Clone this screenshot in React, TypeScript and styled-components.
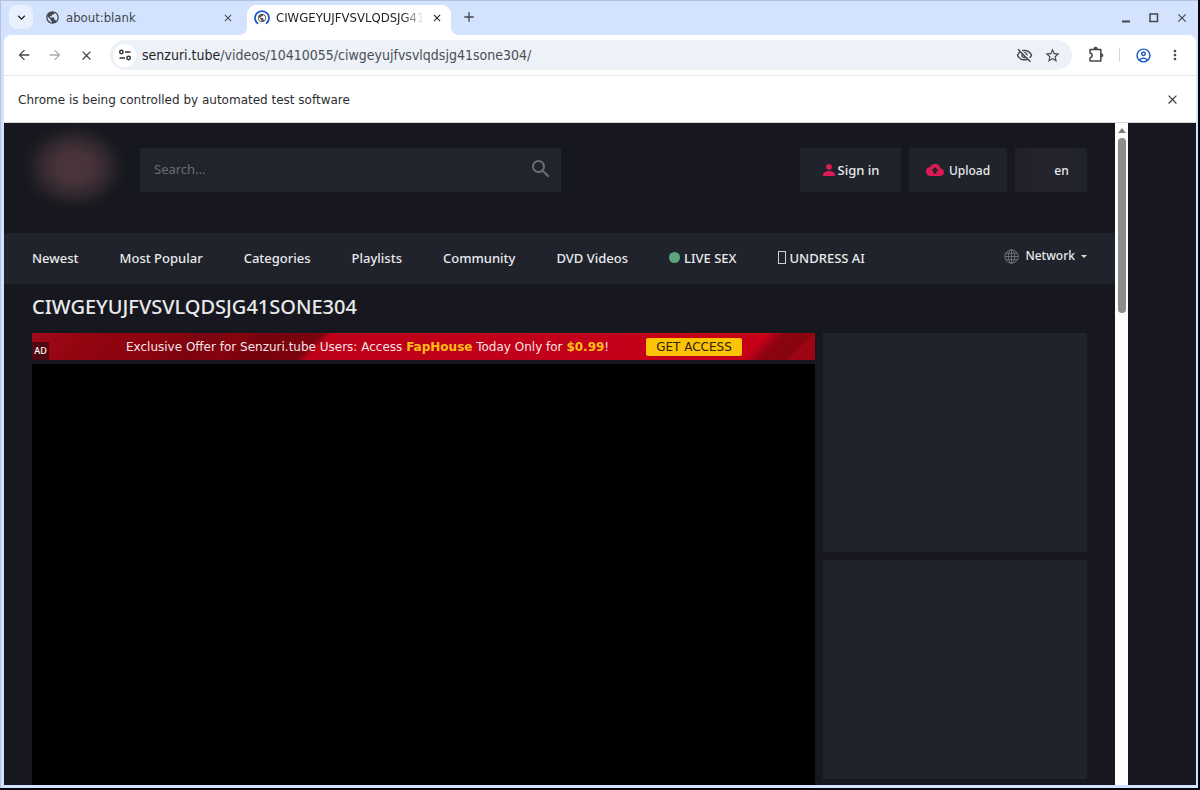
import React from "react";
import styled, { createGlobalStyle } from "styled-components";
import {
  MdArrowBack,
  MdArrowForward,
  MdClose,
  MdCloudUpload,
  MdExpandMore,
  MdMoreVert,
  MdOutlineAccountCircle,
  MdOutlineVisibilityOff,
  MdPerson,
  MdPublic,
  MdSearch,
  MdStarBorder,
  MdAdd,
} from "react-icons/md";

const ui = `"DejaVu Sans Condensed", "DejaVu Sans", sans-serif`;
const site = `"Noto Sans", sans-serif`;

const Global = createGlobalStyle`
  * { box-sizing: border-box; }
  body { margin: 0; background: #05060c; }
  button { border: 0; padding: 0; background: none; color: inherit; font: inherit; }
  a { color: inherit; text-decoration: none; }
  svg { display: block; flex: none; }
`;

const Window = styled.div`
  display: flex;
  flex-direction: column;
  height: 100vh;
  overflow: hidden;
  background: #d4e3fd;
  border: solid #05060c;
  border-width: 0 2px 2px 0;
  padding: 0 2px 3px 4px;
  font-family: ${ui};
  box-shadow: inset 1px 1px 0 #b3c2dc;
`;

const TabStrip = styled.div`
  display: flex;
  align-items: flex-end;
  height: 35px;
  padding-left: 5px;
  flex: none;
  color: #43474e;
`;

const TabSearch = styled.button`
  display: grid;
  place-items: center;
  width: 24px;
  height: 24px;
  margin-bottom: 6px;
  border-radius: 8px;
  background: #eaf1fe;
  color: #1f1f1f;
`;

const Tab = styled.div<{ $active?: boolean }>`
  position: relative;
  display: flex;
  align-items: center;
  gap: 6px;
  width: ${(p) => (p.$active ? 204 : 202)}px;
  height: 30px;
  margin-left: ${(p) => (p.$active ? 0 : 12)}px;
  padding: 0 ${(p) => (p.$active ? 7 : 12)}px 5px ${(p) => (p.$active ? 7 : 0)}px;
  border-radius: 9px 9px 0 0;
  background: ${(p) => (p.$active ? "#fff" : "transparent")};
  color: ${(p) => (p.$active ? "#1f1f1f" : "#43474e")};
  font-size: 13px;
  line-height: 24px;

  &::before,
  &::after {
    content: "";
    display: ${(p) => (p.$active ? "block" : "none")};
    position: absolute;
    bottom: 0;
    width: 8px;
    height: 8px;
  }
  &::before {
    left: -8px;
    background: radial-gradient(circle at 0 0, transparent 8px, #fff 8px);
  }
  &::after {
    right: -8px;
    background: radial-gradient(circle at 100% 0, transparent 8px, #fff 8px);
  }
`;

const TabTitle = styled.span<{ $fade?: boolean }>`
  flex: 1;
  min-width: 0;
  overflow: hidden;
  white-space: nowrap;
  mask-image: ${(p) => (p.$fade ? "linear-gradient(90deg, #000 86%, transparent)" : "none")};
`;

const TabClose = styled.button`
  display: grid;
  place-items: center;
  width: 14px;
  height: 20px;
`;

const NewTab = styled.button`
  display: grid;
  place-items: center;
  width: 24px;
  height: 24px;
  margin: 0 0 6px 6px;
`;

const WindowControls = styled.div`
  display: flex;
  gap: 14px;
  margin: 0 7px 10px auto;
`;

const ControlButton = styled.button`
  display: grid;
  place-items: center;
  width: 14px;
  height: 14px;
`;

const Toolbar = styled.div`
  display: flex;
  align-items: center;
  height: 41px;
  flex: none;
  padding: 0 12px 0 11px;
  background: #fff;
  border-bottom: 1px solid #e4e6ea;
  border-radius: 7px 7px 0 0;
  color: #45474a;
`;

const ToolButton = styled.button<{ $tone?: string }>`
  display: grid;
  place-items: center;
  width: 18px;
  height: 24px;
  color: ${(p) => p.$tone ?? "#45474a"};
`;

const NavButtons = styled.div`
  display: flex;
  gap: 13px;
`;

const Address = styled.div`
  display: flex;
  align-items: center;
  gap: 10px;
  flex: 1;
  height: 30px;
  margin-left: 15px;
  padding: 0 11px 0 3px;
  border-radius: 15px;
  background: #edf1f8;
`;

const SiteInfo = styled.button`
  display: grid;
  place-items: center;
  width: 23px;
  height: 23px;
  margin-right: -4px;
  border-radius: 50%;
  background: #fff;
  color: #333;
`;

const Url = styled.div`
  flex: 1;
  font-size: 14px;
  line-height: 20px;
  color: #4b4f54;
  span { color: #1f1f1f; }
`;

const ToolActions = styled.div`
  display: flex;
  align-items: center;
  gap: 14px;
  margin-left: 15px;
`;

const Divider = styled.span`
  width: 1px;
  height: 14px;
  background: #ccd6e4;
`;

const InfoBar = styled.div`
  display: flex;
  align-items: center;
  justify-content: space-between;
  height: 47px;
  flex: none;
  padding: 1px 15px 0 14px;
  background: #fff;
  border-bottom: 1px solid #d6d8da;
  font: 12px/20px "DejaVu Sans", sans-serif;
  color: #2b2c2e;
`;

const Viewport = styled.div`
  display: flex;
  flex: 1;
  min-height: 0;
  background: #17181f;
  font-family: ${site};
  color: #e9eaec;
`;

const Page = styled.div`
  flex: 1;
  min-width: 0;
  overflow: hidden;
`;

const ScrollTrack = styled.div`
  display: flex;
  flex-direction: column;
  align-items: center;
  width: 13px;
  background: #fdfdfd;
  margin-right: 68px;
`;

const ScrollUp = styled.span`
  margin: 5px 0;
  border: solid transparent;
  border-width: 0 4px 5px;
  border-bottom-color: #7d7f7d;
`;

const Thumb = styled.span`
  width: 8px;
  height: 175px;
  border-radius: 4px;
  background: #8b8d8b;
`;

const Header = styled.header`
  display: flex;
  align-items: flex-start;
  height: 110px;
  padding: 25px 28px 0 18px;
`;

const Logo = styled.a`
  width: 104px;
  height: 88px;
  margin: -25px 14px 0 0;
  background: radial-gradient(closest-side, #4c353c, #48333a 32%, #33282f 62%, #1d1b22 88%, transparent);
`;

const Search = styled.form`
  display: flex;
  align-items: center;
  width: 421px;
  height: 44px;
  padding: 0 8px 2px 14px;
  background: #20242c;
  color: #6a6e76;
`;

const SearchInput = styled.input`
  flex: 1;
  min-width: 0;
  padding: 0;
  border: 0;
  outline: 0;
  background: none;
  color: #e9eaec;
  font: 13px/20px ${site};
  &::placeholder { color: #6a6c73; opacity: 1; }
`;

const Actions = styled.div`
  display: flex;
  gap: 8px;
  margin-left: auto;
`;

const ActionLink = styled.a<{ $width: number; $size: number; $gap: number }>`
  display: flex;
  align-items: center;
  justify-content: center;
  gap: ${(p) => p.$gap}px;
  width: ${(p) => p.$width}px;
  height: 44px;
  background: #20232b;
  font-size: ${(p) => p.$size}px;
  font-weight: 500;
  svg { color: #dc1a54; }
`;

const Language = styled.button`
  width: 72px;
  height: 44px;
  padding-left: 21px;
  background: linear-gradient(90deg, #1f2028, #25242c 45%, #20232b);
  font-size: 12px;
  font-weight: 500;
`;

const Menu = styled.nav`
  display: flex;
  align-items: center;
  gap: 41px;
  height: 51px;
  padding: 0 28px 2px;
  background: #20232b;
  font-size: 13px;
  line-height: 20px;
  font-weight: 500;
  white-space: nowrap;
`;

const MenuLink = styled.a`
  display: flex;
  align-items: center;
  gap: 4px;
`;

const Dot = styled.span`
  width: 11px;
  height: 11px;
  border-radius: 50%;
  background: #5da57f;
`;

const Tofu = styled.span`
  width: 8px;
  height: 13px;
  border: 1px solid #d0d1d4;
`;

const Network = styled.button`
  display: flex;
  align-items: center;
  gap: 6px;
  margin-left: auto;
  padding-bottom: 3px;
  font-size: 12px;
`;

const Caret = styled.span`
  border: solid transparent;
  border-width: 3px 3px 0;
  border-top-color: #d8d9dc;
`;

const Title = styled.h1`
  margin: 0;
  padding: 8px 28px 11px;
  font-size: 20px;
  line-height: 30px;
  font-weight: 500;
`;

const Content = styled.main`
  display: flex;
  gap: 8px;
  padding: 0 28px;
`;

const Player = styled.section`
  flex: 1;
  min-width: 0;
`;

const Banner = styled.a`
  position: relative;
  display: flex;
  align-items: center;
  height: 27px;
  margin-bottom: 4px;
  padding-left: 94px;
  background:
    linear-gradient(135deg, transparent 36%, #bd0019 37%, #c60019 91%, transparent 93%),
    linear-gradient(135deg, #a30a1a, #92040f 8%, #8a0410 17%, #7a0310 22%, #85040f 26%, #74020d 30%, #7e030e 36%, #8c0410 93%, #86040f 96%, #a00616 97%, #98040f);
  font: 12px/20px "DejaVu Sans", sans-serif;
  color: #f5e3e5;
  white-space: nowrap;
  b { color: #ffbe16; }
`;

const AdMark = styled.span`
  position: absolute;
  left: 0;
  bottom: 0;
  width: 17px;
  height: 18px;
  background: #50070f;
  color: #fff;
  font: 500 9px/18px ${site};
  text-align: center;
`;

const Access = styled.span`
  height: 18px;
  margin-left: 37px;
  padding: 0 10px;
  border-radius: 2px;
  background: #fcc307;
  color: #2b2208;
  line-height: 18px;
`;

const Video = styled.div`
  height: 440px;
  background: #000;
`;

const Side = styled.aside`
  display: flex;
  flex-direction: column;
  gap: 8px;
  width: 264px;
`;

const AdSlot = styled.div`
  height: 219px;
  background: #20232b;
`;

const TuneIcon = () => (
  <svg width="14" height="14" viewBox="0 0 14 14" fill="none" stroke="currentColor" strokeWidth="1.5">
    <circle cx="3.4" cy="4" r="1.7" />
    <path d="M7 4h5.5M1.5 10h5.5" />
    <circle cx="10.6" cy="10" r="1.7" />
  </svg>
);

const PuzzleIcon = () => (
  <svg width="18" height="18" viewBox="0 0 18 18" fill="none" stroke="currentColor" strokeWidth="1.5" strokeLinejoin="round">
    <path d="M3 3.500h10.800v11.500H3v-3.300c1.300-.2 2.100-1.100 2.100-2.400S4.300 7.100 3 6.900z" />
    <path d="M7.200 3a1.400 1.400 0 0 1 2.800 0M14.200 7.900a1.400 1.400 0 0 1 0 2.800" fill="currentColor" />
  </svg>
);

const LoadingIcon = () => (
  <svg width="16" height="16" viewBox="0 0 16 16">
    <path d="M4 13.800A7 7 0 1 1 12 13.800" fill="none" stroke="#1a56c4" strokeWidth="1.800" />
    <g transform="translate(3 3)" fill="#50565e">
      <path transform="scale(.417)" d="M12 2C6.480 2 2 6.480 2 12s4.480 10 10 10 10-4.480 10-10S17.520 2 12 2zm-1 17.930c-3.950-.49-7-3.850-7-7.930 0-.62.080-1.210.210-1.790L9 15v1c0 1.100.900 2 2 2v1.930zm6.900-2.540c-.26-.81-1-1.390-1.900-1.390h-1v-3c0-.55-.45-1-1-1H8v-2h2c.550 0 1-.45 1-1V7h2c1.100 0 2-.9 2-2v-.41c2.930 1.190 5 4.060 5 7.410 0 2.080-.8 3.970-2.100 5.390z" />
    </g>
  </svg>
);

const GlobeIcon = () => (
  <svg width="15" height="15" viewBox="0 0 15 15" fill="none" stroke="#6b6e75">
    <circle cx="7.500" cy="7.500" r="6.700" />
    <ellipse cx="7.500" cy="7.500" rx="3.200" ry="6.700" />
    <path d="M7.500 .8v13.400M.8 7.500h13.400M1.800 4.300h11.400M1.800 10.700h11.400" />
  </svg>
);

const PersonIcon = () => (
  <svg width="14" height="14" viewBox="0 0 14 14" fill="currentColor">
    <circle cx="7" cy="3.800" r="2.900" />
    <path d="M1 13v-1.500c0-2.200 3.500-3.500 6-3.500s6 1.300 6 3.500V13z" />
  </svg>
);

const menuItems = ["Newest", "Most Popular", "Categories", "Playlists", "Community", "DVD Videos"];

export default function App() {
  return (
    <>
      <Global />
      <Window>
        <TabStrip>
          <TabSearch aria-label="Search tabs"><MdExpandMore size={15} /></TabSearch>
          <Tab>
            <MdPublic size={15} />
            <TabTitle>about:blank</TabTitle>
            <TabClose aria-label="Close tab"><MdClose size={12} /></TabClose>
          </Tab>
          <Tab $active>
            <LoadingIcon />
            <TabTitle $fade>CIWGEYUJFVSVLQDSJG41SONE304</TabTitle>
            <TabClose aria-label="Close tab"><MdClose size={12} /></TabClose>
          </Tab>
          <NewTab aria-label="New tab"><MdAdd size={16} /></NewTab>
          <WindowControls>
            <ControlButton aria-label="Minimize">
              <svg width="14" height="14"><path d="M3 10.500h8" stroke="#43474e" strokeWidth="2" /></svg>
            </ControlButton>
            <ControlButton aria-label="Maximize">
              <svg width="14" height="14"><path d="M3 3h7.500v7.500H3z" fill="none" stroke="#43474e" strokeWidth="1.500" /></svg>
            </ControlButton>
            <ControlButton aria-label="Close window"><MdClose size={14} /></ControlButton>
          </WindowControls>
        </TabStrip>
        <Toolbar>
          <NavButtons>
            <ToolButton aria-label="Back"><MdArrowBack size={16} /></ToolButton>
            <ToolButton aria-label="Forward" $tone="#a9abae"><MdArrowForward size={16} /></ToolButton>
            <ToolButton aria-label="Stop"><MdClose size={15} /></ToolButton>
          </NavButtons>
          <Address>
            <SiteInfo aria-label="Site information"><TuneIcon /></SiteInfo>
            <Url><span>senzuri.tube</span>/videos/10410055/ciwgeyujfvsvlqdsjg41sone304/</Url>
            <ToolButton aria-label="Tracking protection"><MdOutlineVisibilityOff size={17} /></ToolButton>
            <ToolButton aria-label="Bookmark"><MdStarBorder size={17} /></ToolButton>
          </Address>
          <ToolActions>
            <ToolButton aria-label="Extensions"><PuzzleIcon /></ToolButton>
            <Divider />
            <ToolButton aria-label="Profile" $tone="#1a56c4"><MdOutlineAccountCircle size={17} /></ToolButton>
            <ToolButton aria-label="Menu"><MdMoreVert size={16} /></ToolButton>
          </ToolActions>
        </Toolbar>
        <InfoBar>
          <span>Chrome is being controlled by automated test software</span>
          <ToolButton aria-label="Dismiss"><MdClose size={15} /></ToolButton>
        </InfoBar>
        <Viewport>
          <Page>
            <Header>
              <Logo href="#" aria-label="Home" />
              <Search>
                <SearchInput aria-label="Search" placeholder="Search..." />
                <button type="button" aria-label="Submit search"><MdSearch size={24} /></button>
              </Search>
              <Actions>
                <ActionLink href="#" $width={101} $size={13} $gap={2}><PersonIcon />Sign in</ActionLink>
                <ActionLink href="#" $width={98} $size={12} $gap={5}><MdCloudUpload size={18} />Upload</ActionLink>
                <Language>en</Language>
              </Actions>
            </Header>
            <Menu>
              {menuItems.map((item) => <MenuLink href="#" key={item}>{item}</MenuLink>)}
              <MenuLink href="#"><Dot />LIVE SEX</MenuLink>
              <MenuLink href="#"><Tofu />UNDRESS AI</MenuLink>
              <Network><GlobeIcon />Network<Caret /></Network>
            </Menu>
            <Title>CIWGEYUJFVSVLQDSJG41SONE304</Title>
            <Content>
              <Player>
                <Banner href="#">
                  <AdMark>AD</AdMark>
                  <span>Exclusive Offer for Senzuri.tube Users: Access <b>FapHouse</b> Today Only for <b>$0.99</b>!</span>
                  <Access>GET ACCESS</Access>
                </Banner>
                <Video />
              </Player>
              <Side><AdSlot /><AdSlot /></Side>
            </Content>
          </Page>
          <ScrollTrack><ScrollUp /><Thumb /></ScrollTrack>
        </Viewport>
      </Window>
    </>
  );
}
